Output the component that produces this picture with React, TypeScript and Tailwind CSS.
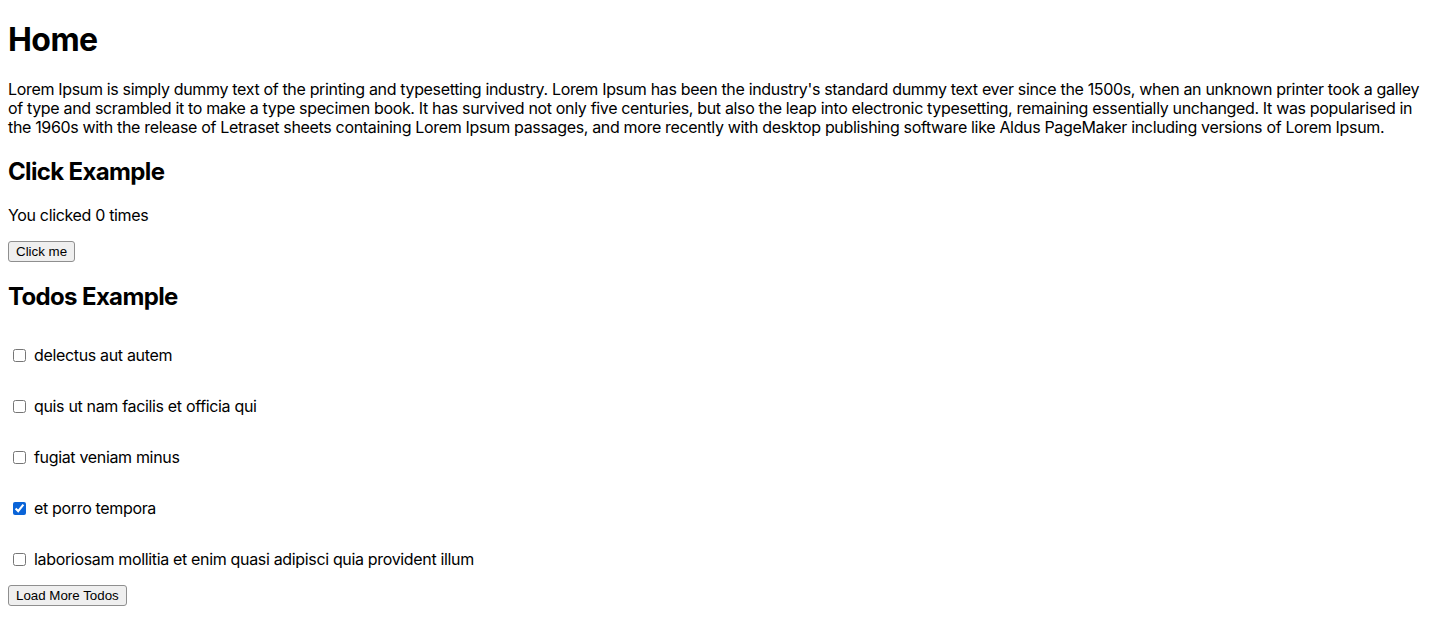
import React, { useState } from "react";

const todos = [
  { title: "delectus aut autem", done: false },
  { title: "quis ut nam facilis et officia qui", done: false },
  { title: "fugiat veniam minus", done: false },
  { title: "et porro tempora", done: true },
  { title: "laboriosam mollitia et enim quasi adipisci quia provident illum", done: false },
];

const btn =
  "block h-[21px] rounded-[3px] border border-[#8f8f8f] bg-[#efefef] px-[7px] text-[13.33px] leading-[19px] tracking-normal text-black font-['Liberation_Sans',Arial,sans-serif]";

export default function App() {
  const [count, setCount] = useState(0);
  const [items, setItems] = useState(todos);
  return (
    <div className="bg-white min-h-[641px] px-2 pt-[21px] pb-4 text-black font-['Inter','Noto_Sans',sans-serif] text-[16px] tracking-[-0.021em]">
      <h1 className="text-[32px] font-bold leading-[38px] mb-[21px] tracking-[-0.018em]">Home</h1>
      <p className="leading-[19px] mb-4">
        Lorem Ipsum is simply dummy text of the printing and typesetting industry. Lorem Ipsum has been the industry's standard dummy text ever since the 1500s, when an unknown printer took a galley of type and scrambled it to make a type specimen book. It has survived not only five centuries, but also the leap into electronic typesetting, remaining essentially unchanged. It was popularised in the 1960s with the release of Letraset sheets containing Lorem Ipsum passages, and more recently with desktop publishing software like Aldus PageMaker including versions of Lorem Ipsum.
      </p>
      <h2 className="text-[24px] font-bold leading-[29px] mt-5 mb-5 tracking-[-0.027em]">Click Example</h2>
      <p className="leading-[19px] mb-4">You clicked {count} times</p>
      <button className={`${btn} mt-[1px]`} onClick={() => setCount(count + 1)}>
        Click me
      </button>
      <h2 className="text-[24px] font-bold leading-[29px] mt-5 mb-[19px] tracking-[-0.027em]">Todos Example</h2>
      <div className="flex flex-col">
        {items.map((t, i) => (
          <p key={i} className="my-4 leading-[19px] flex items-center">
            <input
              type="checkbox"
              checked={t.done}
              onChange={() =>
                setItems(items.map((x, j) => (j === i ? { ...x, done: !x.done } : x)))
              }
              className="ml-[5px] mr-[8px] w-[13px] h-[13px] accent-[#0a64d8]"
            />
            <span>{t.title}</span>
          </p>
        ))}
      </div>
      <button className={btn}>Load More Todos</button>
    </div>
  );
}
